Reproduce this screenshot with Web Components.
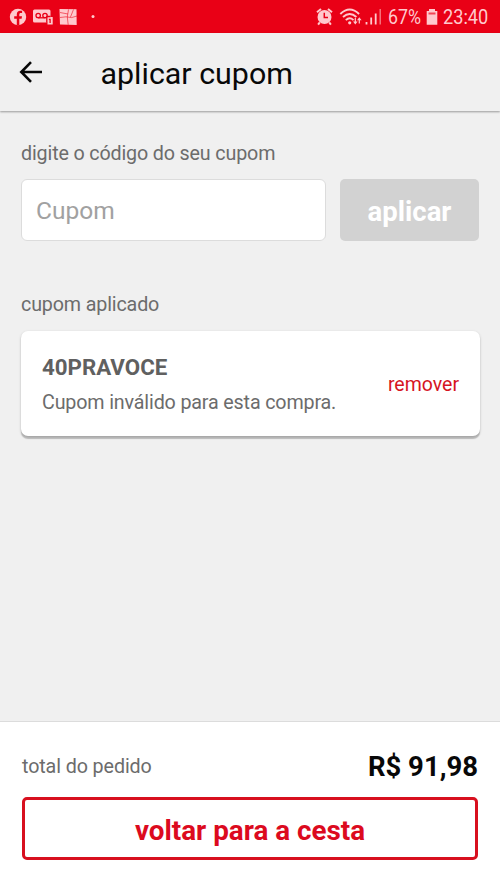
<!DOCTYPE html>
<html lang="pt-BR">
<head>
<meta charset="utf-8">
<title>aplicar cupom</title>
<style>
html,body{margin:0;height:100%;overflow:hidden}
body{font-family:Roboto,"Liberation Sans",sans-serif;background:#f0f0f0;color:#666}
</style>
</head>
<body>
<coupon-app></coupon-app>
<script>
function define(name, html){
  const t=document.createElement('template');
  t.innerHTML=html;
  customElements.define(name,class extends HTMLElement{
    constructor(){super();this.attachShadow({mode:'open'}).appendChild(t.content.cloneNode(true));}
  });
}
define('status-bar',`
<style>
:host{display:flex;height:33px;flex:none;background:#e90016;color:#ffc9cd;box-sizing:border-box;align-items:stretch;justify-content:space-between}
svg{display:block}
.right{display:flex;width:190px}
.t{font-size:20px;line-height:35px;white-space:nowrap;transform-origin:0 50%}
.pct{width:38px;transform:scaleX(.89)}
.clock{width:50px;transform:scaleX(.91)}
</style>
<svg width="110" height="33" viewBox="0 0 110 33" fill="#ffc9cd">
<circle cx="18" cy="17" r="8.2"/>
<path d="M16.8 25.2v-6.4h-2.6v-2.6h2.6v-1.7c0-2.5 1.4-3.7 3.4-3.7h1.9v2.3h-1.3c-1.1 0-1.5.6-1.5 1.5v1.6h2.7l-.4 2.6h-2.3v6.4z" fill="#e90016"/>
<path d="M34.5 9.500h14.500q1.500 0 1.500 1.500v6h2.200v7.500h-5.200v-2H34.500q-1.500 0-1.500-1.500V11q0-1.500 1.500-1.500z"/>
<g fill="none" stroke="#e90016" stroke-width="1.300"><circle cx="38.200" cy="15.500" r="2.200"/><circle cx="45" cy="15.500" r="2.200"/><path d="M38 17.800h7.500"/><path d="M46.800 22.800v-6.300h3.800"/><path d="M48.900 19.300h1.200v3.700"/></g>
<path d="M59.500 9l17 .3.200 15.700-16.700-.5z"/>
<g fill="none" stroke="#e90016" stroke-width=".8" opacity=".7"><path d="M60 17.500l6-.7 5.500.8 5.500-1.600M68.500 9.500l-1.200 7.500.9 7.800M73.500 9.500l-3 7.500M60 12.500l8 1.500"/></g>
<circle cx="93" cy="16.500" r="1.500"/>
</svg>
<div class="right">
<svg width="78" height="33" viewBox="310 0 78 33" fill="none" stroke="#ffc9cd">
<circle cx="324.500" cy="17" r="7" fill="#ffc9cd" stroke="none"/>
<path d="M317 12.300l4-3.400M332 12.300l-4-3.400M319.800 22.400l-1.700 2.200M329.200 22.400l1.700 2.200" stroke-width="2"/>
<path d="M324.300 12.700v4.800h3.700" stroke="#e90016" stroke-width="1.500"/>
<path d="M340.300 14Q349.700 5.200 359.100 14M343 17Q349.700 11 356.400 17M345.800 20.100Q349.700 16.500 353.500 20.100" stroke-width="1.900"/>
<circle cx="349.700" cy="22.800" r="1.600" fill="#ffc9cd" stroke="none"/>
<path d="M355.300 18v5M359.300 19v4.500" stroke-width="1.200"/><path d="M353 21.500h4.600l-2.300 3zM357 20.200h4.600l-2.300-3z" fill="#ffc9cd" stroke="none"/>
<path d="M366.500 22v2.500M371.200 17.500v7M375.700 13.500v11" stroke-width="1.800"/>
<path d="M380.200 9v15.500" stroke-width="1.300" opacity=".65"/>
</svg>
<div class="t pct">67%</div>
<svg width="17" height="33" viewBox="426 0 17 33"><path d="M429 9h6v2h2.300v13.800h-10.600V11h2.300z" fill="#ffc9cd"/><path d="M428.500 12.500h7v2h-7z" fill="#e90016" opacity=".65"/></svg>
<div class="t clock">23:40</div>
</div>`);
define('app-header',`
<style>
:host{display:flex;height:78px;flex:none;box-sizing:border-box;align-items:center;background:#f0f0f0;color:#080808;box-shadow:0 1px 2px rgba(0,0,0,.36);z-index:1;padding-left:19px}
svg{display:block;margin-right:57.500px}
h1{font-size:30.400px;font-weight:400;line-height:40px;margin:3px 0 0}
</style>
<svg width="24" height="24" viewBox="0 0 24 24" fill="none" stroke="#080808" stroke-width="2.600"><path d="M12 2.200L2.300 12l9.700 9.800M2 12h21"/></svg>
<h1><slot></slot></h1>`);
define('section-label',`
<style>:host{display:block;font-size:19.700px;letter-spacing:-.15px;line-height:24px;color:#6c6c6c;white-space:nowrap}</style><slot></slot>`);
define('coupon-form',`
<style>
:host{display:grid;grid-template-columns:305px 139px;grid-template-rows:62px;gap:14px;height:63px}
.in{box-sizing:border-box;border:1.500px solid #dcdcdc;border-radius:6px;background:#fff;color:#a1a1a1;font-size:24.500px;line-height:62px;padding-left:14px}
.b{border-radius:5px;background:#d2d2d2;color:#fff;font-weight:700;font-size:27.500px;line-height:66px;text-align:center}
</style><div class="in">Cupom</div><div class="b">aplicar</div>`);
define('coupon-card',`
<style>
:host{display:flex;box-sizing:border-box;height:105px;width:459px;background:#fff;border-radius:7px;box-shadow:0 2.500px 1px rgba(0,0,0,.2),0 1px 3px rgba(0,0,0,.18);padding:22px 21px 0 21px;justify-content:space-between}
.code{font-size:22.300px;line-height:28px;font-weight:700;color:#606060}
.msg{font-size:19.700px;letter-spacing:-.15px;line-height:24px;margin-top:10px;color:#6c6c6c}
.rm{font-size:19.500px;line-height:24px;margin-top:20px;color:#d6141f}
</style>
<div><div class="code"><slot name="code"></slot></div><div class="msg"><slot></slot></div></div><div class="rm">remover</div>`);
define('order-footer',`
<style>
:host{display:flex;flex-direction:column;box-sizing:border-box;height:168px;flex:none;background:#fff;border-top:1.500px solid #dcdcdc;padding:25px 22px 0}
.row{display:flex;justify-content:space-between;align-items:center;height:38px}
.l{font-size:19.700px;letter-spacing:-.1px;color:#6c6c6c}
.v{font-size:27.500px;font-weight:700;color:#080808}
.btn{box-sizing:border-box;height:63px;margin-top:12px;border:3px solid #d8101f;border-radius:5px;text-align:center;font-weight:700;font-size:27.800px;line-height:61px;color:#dc0a1e}
</style>
<div class="row"><span class="l">total do pedido</span><span class="v"><slot></slot></span></div>
<div class="btn">voltar para a cesta</div>`);
define('coupon-app',`
<style>
:host{display:flex;flex-direction:column;width:500px;height:889px}
main{flex:1;display:flex;flex-direction:column;padding:31px 20px 0 21px}
coupon-form{margin:13px 0 51px}
coupon-card{margin-top:14px}
</style>
<status-bar></status-bar>
<app-header>aplicar cupom</app-header>
<main>
<section-label>digite o código do seu cupom</section-label>
<coupon-form></coupon-form>
<section-label>cupom aplicado</section-label>
<coupon-card><span slot="code">40PRAVOCE</span>Cupom inválido para esta compra.</coupon-card>
</main>
<order-footer>R$ 91,98</order-footer>`);
</script>
</body>
</html>
